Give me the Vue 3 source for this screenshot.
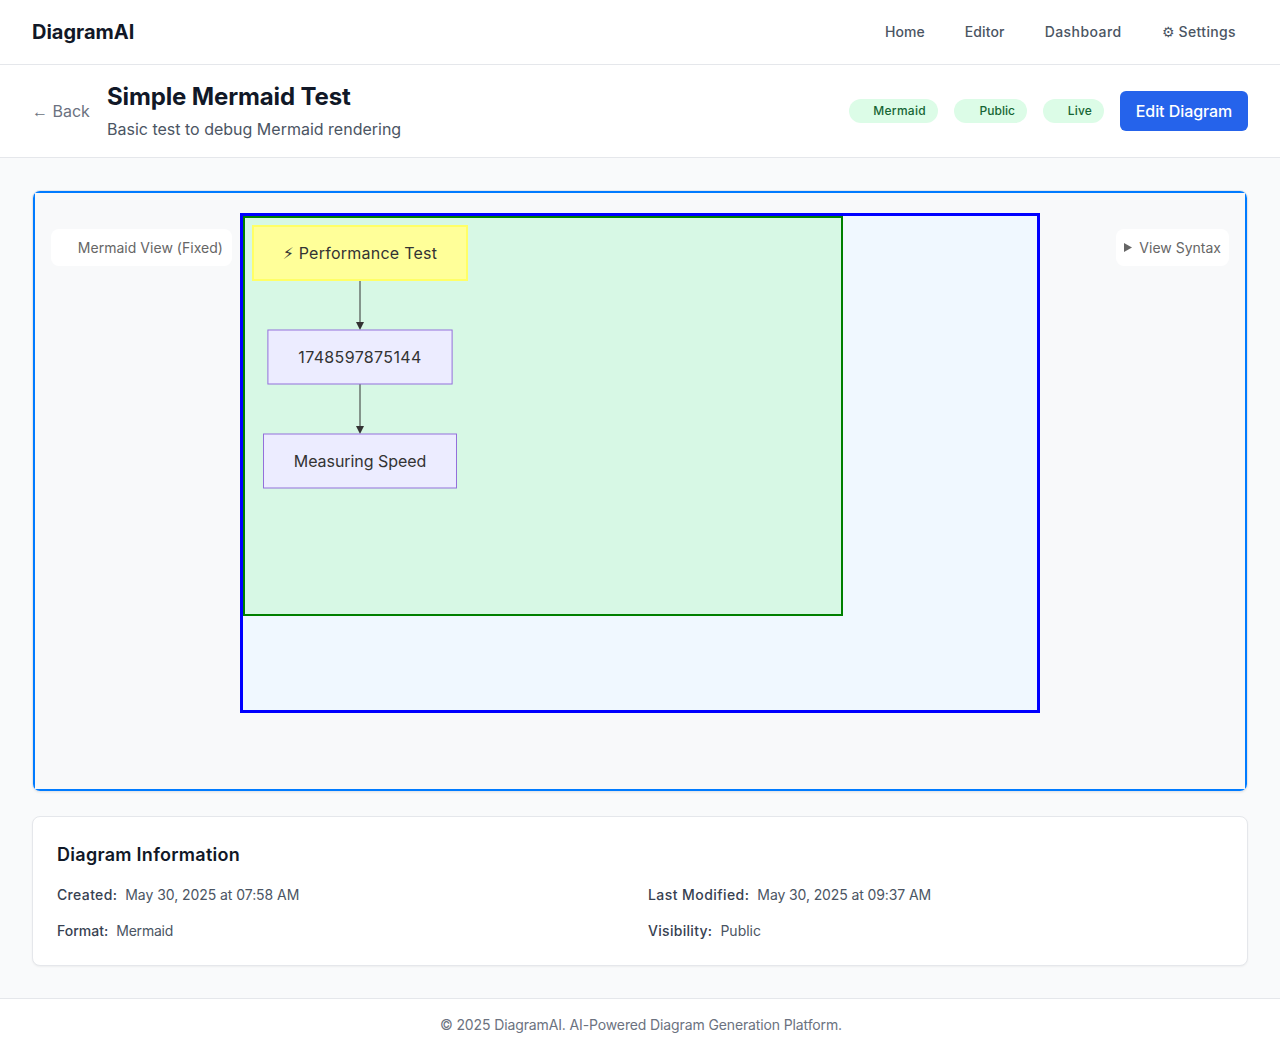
<script setup>
const links = [
  { label: 'Home', track: 0 },
  { label: 'Editor', track: 0.15 },
  { label: 'Dashboard', track: 0.43 },
  { icon: '⚙', label: 'Settings', track: 0.36 },
]
const badges = [
  { label: 'Mermaid', width: 89, track: 0.3 },
  { label: 'Public', width: 73, track: 0.05 },
  { label: 'Live', width: 61, track: 0.15 },
]
const info = [
  { key: 'Created:', value: 'May 30, 2025 at 07:58 AM', track: 0.35, valueTrack: -0.06 },
  { key: 'Last Modified:', value: 'May 30, 2025 at 09:37 AM', track: 0.43, valueTrack: -0.11 },
  { key: 'Format:', value: 'Mermaid', track: 0, valueTrack: -0.2 },
  { key: 'Visibility:', value: 'Public', track: 0.3, valueTrack: 0 },
]
const nodes = [
  { icon: '⚡', label: 'Performance Test', x: 8, y: 8, w: 214, hot: true, track: 0.25 },
  { label: '1748597875144', x: 22.9, y: 112, w: 184.2, track: 0.35 },
  { label: 'Measuring Speed', x: 18.5, y: 216, w: 193, track: -0.05 },
]
const edges = [62, 166]
const spacing = (px) => ({ letterSpacing: px + 'px' })
</script>

<template>
  <div class="page">
    <header class="topbar">
      <div class="brand">DiagramAI</div>
      <nav class="nav">
        <a v-for="link in links" :key="link.label" :style="spacing(link.track)"><span v-if="link.icon" class="gear">{{ link.icon }}</span>{{ link.label }}</a>
      </nav>
    </header>

    <section class="titlebar">
      <div class="left">
        <a class="back"><span class="back-arrow">←</span> Back</a>
        <div>
          <h1>Simple Mermaid Test</h1>
          <p>Basic test to debug Mermaid rendering</p>
        </div>
      </div>
      <div class="actions">
        <span v-for="b in badges" :key="b.label" class="badge" :style="{ width: b.width + 'px', letterSpacing: b.track + 'px' }">{{ b.label }}</span>
        <button class="edit">Edit Diagram</button>
      </div>
    </section>

    <main class="main">
      <div class="frame">
        <div class="viewer">
          <div class="chip chip-left">Mermaid View (Fixed)</div>
          <div class="canvas">
            <svg class="diagram" width="600" height="400" viewBox="0 0 596 396">
              <g v-for="y in edges" :key="y">
                <path class="edge" :d="`M115 ${y}V${y + 46}`" />
                <path class="arrow" :d="`M111 ${y + 42}L115 ${y + 50}L119 ${y + 42}Z`" />
              </g>
              <g v-for="n in nodes" :key="n.label">
                <rect :class="n.hot ? 'node hot' : 'node'" :x="n.x" :y="n.y" :width="n.w" height="54" />
                <foreignObject :x="n.x" :y="n.y + 15" :width="n.w" height="24">
                  <div class="label" :style="spacing(n.track)"><span v-if="n.icon" class="bolt">{{ n.icon }}</span>{{ n.label }}</div>
                </foreignObject>
              </g>
            </svg>
          </div>
          <div class="chip chip-right">
            <svg width="8" height="9" viewBox="0 0 8 9"><path d="M0 0L8 4.5L0 9Z" fill="#666" /></svg>
            View Syntax
          </div>
        </div>
      </div>

      <section class="card">
        <h2>Diagram Information</h2>
        <dl class="grid">
          <div v-for="item in info" :key="item.key" class="row">
            <dt :style="spacing(item.track)">{{ item.key }}</dt>
            <dd :style="spacing(item.valueTrack)">{{ item.value }}</dd>
          </div>
        </dl>
      </section>
    </main>

    <footer class="footer">© 2025 DiagramAI. AI-Powered Diagram Generation Platform.</footer>
  </div>
</template>

<style>
body { margin: 0; background: #f9fafb; }
</style>

<style scoped>
.page, .page * { box-sizing: border-box; }
.page {
  display: flex;
  flex-direction: column;
  min-height: 1051px;
  font: 400 16px/24px Inter, sans-serif;
  color: #111827;
  background: #f9fafb;
}
h1, h2, p, dl, dd { margin: 0; }
.topbar {
  display: flex;
  justify-content: space-between;
  align-items: center;
  height: 65px;
  padding: 0 32px;
  background: #fff;
  border-bottom: 1px solid #e5e7eb;
}
.brand { font-size: 20px; line-height: 28px; font-weight: 700; }
.nav { display: flex; gap: 16px; }
.nav a { padding: 8px 12px; font-size: 14px; line-height: 20px; font-weight: 500; color: #4b5563; }
.gear { display: inline-block; width: 17px; letter-spacing: 0; }
.titlebar {
  display: flex;
  justify-content: space-between;
  align-items: center;
  height: 93px;
  padding: 16px 32px;
  background: #fff;
  border-bottom: 1px solid #e5e7eb;
}
.left { display: flex; align-items: center; gap: 16px; }
.back { width: 59px; white-space: nowrap; color: #6b7280; }
.back-arrow { font-family: "Liberation Sans", sans-serif; line-height: 1; }
h1 { font-size: 24px; line-height: 32px; font-weight: 700; letter-spacing: -0.13px; }
p { margin-top: 4px; color: #4b5563; }
.actions { display: flex; align-items: center; gap: 16px; }
.badge {
  height: 24px;
  padding: 4px 12px;
  border-radius: 12px;
  background: #dcfce7;
  color: #166534;
  font-size: 12px;
  line-height: 16px;
  font-weight: 500;
  text-align: right;
}
.edit {
  width: 128px;
  height: 40px;
  padding: 8px 0;
  border: 0;
  border-radius: 6px;
  background: #2563eb;
  color: #fff;
  font: 500 16px/24px Inter, sans-serif;
  letter-spacing: -0.06px;
}
.main { flex: 1; padding: 32px; }
.frame {
  overflow: hidden;
  border: 1px solid #e5e7eb;
  border-radius: 8px;
  background: #fff;
  box-shadow: 0 1px 2px rgba(0, 0, 0, 0.05);
}
.viewer {
  position: relative;
  display: flex;
  justify-content: center;
  height: 600px;
  padding: 20px;
  border: 2px solid #007bff;
  background: #f8f9fa;
}
.canvas { width: 800px; height: 500px; border: 3px solid #00f; background: #f0f8ff; }
.diagram { display: block; border: 2px solid green; background: rgba(0, 255, 0, 0.1); }
.node { fill: #ececff; stroke: #9370db; stroke-width: 1px; }
.node.hot { fill: #ff9; stroke: #ff6; stroke-width: 2px; }
.edge { fill: none; stroke: #333; stroke-width: 1px; }
.arrow { fill: #333; }
.label { text-align: center; white-space: nowrap; color: #333; }
.bolt { display: inline-block; width: 16px; font-family: "DejaVu Sans", sans-serif; line-height: 1; text-align: left; letter-spacing: 0; }
.chip {
  position: absolute;
  top: 36px;
  display: flex;
  align-items: center;
  justify-content: flex-end;
  height: 37px;
  padding: 8px;
  border-radius: 8px;
  background: #fff;
  color: #666;
  font-size: 14px;
  line-height: 21px;
}
.chip-left { left: 16px; width: 181px; padding-right: 9px; letter-spacing: 0.03px; }
.chip-right { right: 16px; gap: 7px; }
.card {
  height: 150px;
  margin-top: 24px;
  padding: 24px;
  border: 1px solid #e5e7eb;
  border-radius: 8px;
  background: #fff;
  box-shadow: 0 1px 2px rgba(0, 0, 0, 0.05);
}
h2 { font-size: 18px; line-height: 28px; font-weight: 600; letter-spacing: 0.28px; }
.grid { display: grid; grid-template-columns: 1fr 1fr; gap: 16px; margin-top: 16px; }
.row { display: flex; gap: 8px; font-size: 14px; line-height: 20px; }
dt { font-weight: 500; color: #374151; }
dd { color: #4b5563; }
.footer {
  height: 53px;
  padding: 16px 0 16px 2px;
  border-top: 1px solid #e5e7eb;
  background: #fff;
  color: #6b7280;
  font-size: 14px;
  line-height: 20px;
  letter-spacing: -0.125px;
  text-align: center;
}
</style>
